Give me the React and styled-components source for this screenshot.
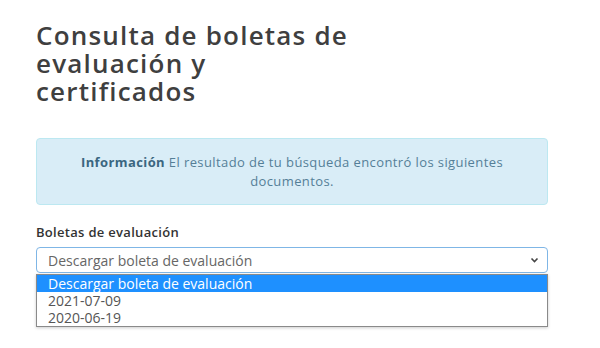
import React from 'react'
import styled, { createGlobalStyle } from 'styled-components'

const GlobalStyle = createGlobalStyle`
  body {
    margin: 0;
    background: #fff;
    font-family: "Open Sans", "Liberation Sans", sans-serif;
  }
`

const Page = styled.div`
  width: 548px;
  min-height: 348px;
  box-sizing: border-box;
  padding: 21px 0 0 36px;
`

const Title = styled.h1`
  margin: 0;
  font-size: 26px;
  line-height: 28px;
  font-weight: 600;
  color: #3f3f3f;
  letter-spacing: 1.2px;
`

const Alert = styled.div`
  margin-top: 33px;
  background: #d9edf7;
  border: 1px solid #bce8f1;
  border-radius: 4px;
  padding: 14px 15px 13px;
  text-align: center;
  color: #557f97;
  font-size: 13px;
  line-height: 19px;
  letter-spacing: 0.4px;

  strong {
    font-weight: 700;
    color: #3b6680;
  }
`

const Field = styled.div`
  margin-top: 18px;
`

const Label = styled.label`
  display: block;
  font-size: 13px;
  font-weight: 600;
  color: #333;
  letter-spacing: 0.3px;
  margin-bottom: 6px;
`

const SelectBox = styled.div`
  height: 26px;
  border: 1px solid #7fb6e6;
  border-radius: 4px;
  display: flex;
  align-items: center;
  justify-content: space-between;
  padding: 0 8px 0 11px;
  color: #666;
  font-size: 14px;
  box-sizing: border-box;
`

const Options = styled.ul`
  margin: 1px 0 0;
  padding: 0;
  list-style: none;
  background: #fff;
  border: 1px solid #8a8a8a;
  box-shadow: 0 1px 3px rgba(0, 0, 0, 0.2);
`

const Option = styled.li`
  height: 17px;
  line-height: 17px;
  padding-left: 11px;
  font-size: 14px;
  background: ${p => (p.$active ? '#1e90ff' : '#fff')};
  color: ${p => (p.$active ? '#fff' : '#555')};
`

const Chevron = () => (
  <svg width="9" height="6" viewBox="0 0 9 6">
    <path d="M1.5 1.5 L4.5 4.5 L7.5 1.5" fill="none" stroke="#444" strokeWidth="1.6" />
  </svg>
)

const options = ['Descargar boleta de evaluación', '2021-07-09', '2020-06-19']

export default function App() {
  return (
    <Page>
      <GlobalStyle />
      <Title>
        Consulta de boletas de<br />evaluación y<br />certificados
      </Title>
      <Alert>
        <strong>Información</strong> El resultado de tu búsqueda encontró los siguientes<br />
        documentos.
      </Alert>
      <Field>
        <Label>Boletas de evaluación</Label>
        <SelectBox>
          <span>Descargar boleta de evaluación</span>
          <Chevron />
        </SelectBox>
        <Options>
          {options.map((o, i) => (
            <Option key={o} $active={i === 0}>{o}</Option>
          ))}
        </Options>
      </Field>
    </Page>
  )
}
